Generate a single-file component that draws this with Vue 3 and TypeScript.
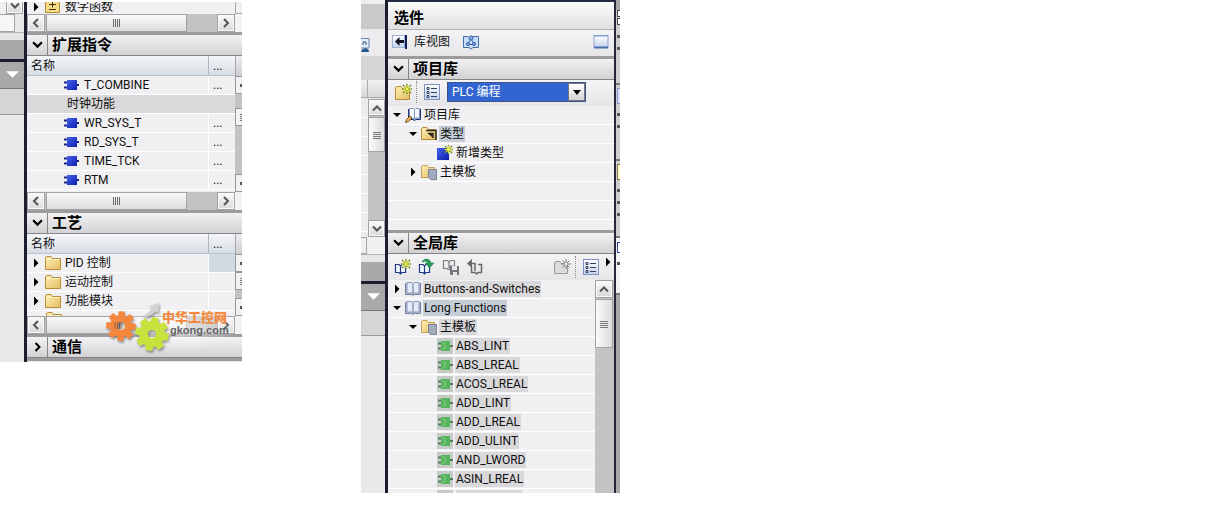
<script setup lang="ts">
import { ref } from 'vue'

interface InstructionRow {
  name: string
  icon?: string
}

const clockRows: InstructionRow[] = [
  { name: 'T_COMBINE', icon: 'block' },
  { name: '时钟功能' },
  { name: 'WR_SYS_T', icon: 'block' },
  { name: 'RD_SYS_T', icon: 'block' },
  { name: 'TIME_TCK', icon: 'block' },
  { name: 'RTM', icon: 'block' },
]

const technologyRows: string[] = ['PID 控制', '运动控制', '功能模块']

const functions: string[] = [
  'ABS_LINT',
  'ABS_LREAL',
  'ACOS_LREAL',
  'ADD_LINT',
  'ADD_LREAL',
  'ADD_ULINT',
  'AND_LWORD',
  'ASIN_LREAL',
]

const library = ref('PLC 编程')

function gear(cx: number, cy: number, inner: number, outer: number, turn: number): string {
  const points: string[] = []
  const offsets: [number, number][] = [
    [-0.3, inner],
    [-0.2, outer],
    [0.2, outer],
    [0.3, inner],
  ]
  for (let i = 0; i < 8; i++) {
    const mid = turn + (i * Math.PI) / 4
    for (const [delta, radius] of offsets) {
      const x = cx + radius * Math.cos(mid + delta)
      const y = cy + radius * Math.sin(mid + delta)
      points.push(`${x.toFixed(2)} ${y.toFixed(2)}`)
    }
  }
  const hole = 4
  return `M${points.join('L')}ZM${cx - hole} ${cy}a${hole} ${hole} 0 1 0 ${hole * 2} 0a${hole} ${hole} 0 1 0 ${-hole * 2} 0Z`
}

const orangeGear = gear(14, 23, 11, 15, 0.05)
const greenGear = gear(45, 31, 13, 17, 0.2)
</script>

<template>
  <svg class="defs" aria-hidden="true">
    <defs>
      <linearGradient id="fold" x1="0" y1="0" x2="1" y2="1">
        <stop offset="0" stop-color="#fff0b8" />
        <stop offset="1" stop-color="#e2bd62" />
      </linearGradient>
      <linearGradient id="blue" x1="0" y1="0" x2="1" y2="1">
        <stop offset="0" stop-color="#4664ea" />
        <stop offset="1" stop-color="#0c1cae" />
      </linearGradient>
      <linearGradient id="page" x1="0" y1="0" x2="0" y2="1">
        <stop offset="0" stop-color="#fff" />
        <stop offset="1" stop-color="#c4d2ea" />
      </linearGradient>
    </defs>
    <symbol id="down" viewBox="0 0 10 8"><path d="M1 1.5L5 5.5L9 1.5" fill="none" stroke="currentColor" stroke-width="2" /></symbol>
    <symbol id="right" viewBox="0 0 8 10"><path d="M2 1L6 5L2 9" fill="none" stroke="currentColor" stroke-width="2" /></symbol>
    <symbol id="tri-r" viewBox="0 0 8 10"><path d="M2 0.5L6.5 5L2 9.5Z" /></symbol>
    <symbol id="tri-d" viewBox="0 0 8 10"><path d="M0 3H8L4 7Z" /></symbol>
    <symbol id="block" viewBox="0 0 16 16">
      <path d="M0 5.5H5M0 10.5H5M12 8H15" stroke="#1a2380" stroke-width="2" />
      <rect x="3" y="3" width="10" height="10" fill="url(#blue)" />
    </symbol>
    <symbol id="gblock" viewBox="0 0 16 16">
      <rect width="16" height="16" fill="#c6cbc8" />
      <path d="M1 5.5H5M1 10.5H5M12 8H16" stroke="#4f7d59" stroke-width="2" />
      <rect x="4" y="3" width="9" height="10" fill="#55b45c" />
      <path d="M8 5V11M5 5H7M5 11H7" stroke="#85d488" />
    </symbol>
    <symbol id="folder" viewBox="0 0 16 16">
      <path d="M0.5 14.5V2.5L2 1.5H6L7.5 3.5H15.5V14.5Z" fill="url(#fold)" stroke="#b98d32" />
      <path d="M1.5 4H6M8 4.5H14.5" stroke="#fff7d4" />
    </symbol>
    <symbol id="math" viewBox="0 0 16 16">
      <rect x="0.5" y="0.5" width="14" height="13" fill="#f6dc85" stroke="#b38b38" />
      <path d="M4 5.5H11M7.5 2.5V8.5M4 10.5H11" stroke="#453314" />
    </symbol>
    <symbol id="typefolder" viewBox="0 0 16 16">
      <path d="M0.5 13.5V2.5L2 1.5H6L7.5 3.5H14.5V13.5Z" fill="url(#fold)" stroke="#b98d32" />
      <path d="M5 4.5H15V14M7 7.5H12V12" fill="none" stroke="#2d2920" stroke-width="1.5" />
      <path d="M6.500 7H11.500V11.500Z" fill="#2d2920" />
    </symbol>
    <symbol id="masterfolder" viewBox="0 0 16 16">
      <path d="M0.5 13.5V2.5L2 1.5H6L7.5 3.5H13.5V13.5Z" fill="url(#fold)" stroke="#c2a258" />
      <path d="M7.5 5.5H15.5V15.5H9.5L7.5 13.5Z" fill="#a3acbf" stroke="#7d8494" />
    </symbol>
    <symbol id="book" viewBox="0 0 16 16">
      <path d="M0.5 2V13.5H6.5L8 14.5L9.500 13.5H15.5V2" fill="#b9c3da" stroke="#75809e" />
      <path d="M2 1.5H7L8 2.5V13L7 12H2ZM14 1.5H9L8 2.5V13L9 12H14Z" fill="#e4eaf7" stroke="#8c98b8" />
    </symbol>
    <symbol id="bookpen" viewBox="0 0 16 16">
      <path d="M3.5 2V12.5H8L9.5 13.5L11 12.5H15.5V2" fill="#9fb1de" stroke="#26356b" />
      <path d="M4.500 1.500H8.500L9.500 2.500V12L8.500 11H4.500ZM14.500 1.500H10.500L9.500 2.500V12L10.500 11H14.500Z" fill="#f6f9ff" stroke="#8191c0" />
      <path d="M0.500 15.500L1.500 12.500L5 9L7 11L3.500 14.500Z" fill="#e9b05c" stroke="#80531f" />
    </symbol>
    <symbol id="spark" viewBox="0 0 10 10">
      <path d="M5 0V10M0 5H10M1 1L9 9M9 1L1 9" stroke="#6f8420" stroke-width="1.500" />
      <path d="M5 1V9M1 5H9M2 2L8 8M8 2L2 8" stroke="#f2f757" />
    </symbol>
    <symbol id="newtype" viewBox="0 0 16 16">
      <rect x="0" y="3" width="12" height="12" fill="url(#blue)" />
      <use href="#spark" x="7" y="0" width="9" height="9" />
    </symbol>
    <symbol id="newfolder" viewBox="0 0 18 18">
      <path d="M1.500 16.500V4.500L3 3.500H7L8.500 5.500H15.500V16.500Z" fill="url(#fold)" stroke="#b98d32" />
      <use href="#spark" x="8" y="1" width="10" height="10" />
    </symbol>
    <symbol id="graynewfolder" viewBox="0 0 18 18">
      <path d="M1.500 15.500V4.500L3 3.500H7L8.500 5.500H14.500V15.500Z" fill="#dcdcde" stroke="#99999d" />
      <path d="M13 1V11M8 6H18M9.500 2.500L16.500 9.500M16.500 2.500L9.500 9.500" stroke="#77777b" />
      <circle cx="13" cy="6" r="1.500" fill="#eee" />
    </symbol>
    <symbol id="list" viewBox="0 0 16 16">
      <rect x="0.500" y="0.500" width="15" height="15" fill="url(#page)" stroke="#7d93bf" />
      <path d="M7 4.500H13M7 8.500H13M7 12.500H13" stroke="#34405f" />
      <path d="M3 3.500H5V5.500H3ZM3 7.500H5V9.500H3ZM3 11.500H5V13.500H3Z" fill="none" stroke="#34405f" />
    </symbol>
    <symbol id="window" viewBox="0 0 16 16">
      <rect x="1" y="1.500" width="14" height="12" fill="url(#page)" stroke="#8ba3d2" />
      <path d="M1 2H15" stroke="#7b98ce" />
      <path d="M1 13.500H15" stroke="#4d6db2" stroke-width="2" />
    </symbol>
    <symbol id="back" viewBox="0 0 16 16">
      <rect x="0.500" y="1.500" width="12" height="12" fill="url(#page)" stroke="#a0b2d3" />
      <path d="M14 1V15" stroke="#101d58" stroke-width="2" />
      <path d="M12 7.500H6" stroke="#101020" stroke-width="3" /><path d="M7.500 3V12L3 7.500Z" fill="#101020" />
    </symbol>
    <symbol id="share" viewBox="0 0 16 16">
      <path d="M0.500 2.500H5M10 2.500H15.500V13.500H10L8 15L6 13.500H0.500V2.500" fill="#c8ddfa" stroke="#4470aa" />
      <path d="M8 5L4.500 10.500H11.500Z" fill="none" stroke="#315aa0" />
      <circle cx="8" cy="4" r="2" fill="#8db7f2" stroke="#315aa0" /><circle cx="5" cy="10" r="1.500" fill="#8db7f2" stroke="#315aa0" /><circle cx="11" cy="10" r="1.500" fill="#8db7f2" stroke="#315aa0" />
    </symbol>
    <symbol id="smallbook" viewBox="0 0 12 12">
      <path d="M1 1.500H4.500L6 3L7.500 1.500H11V9.500H7.500L6 11L4.500 9.500H1ZM6 3V10" fill="#f2f6ff" stroke="currentColor" stroke-width="1.200" />
    </symbol>
    <symbol id="newbook" viewBox="0 0 18 18">
      <use href="#smallbook" x="0" y="5" width="13" height="12" color="#223a83" />
      <use href="#spark" x="7" y="1" width="10" height="10" />
    </symbol>
    <symbol id="openbook" viewBox="0 0 18 18">
      <use href="#smallbook" x="0" y="5" width="13" height="12" color="#223a83" />
      <path d="M4 4C6 0 12 0 13 5H16L11.500 10L7.500 5H10C9 3 7 3 4 4Z" fill="#279b5a" stroke="#11713b" stroke-width="0.500" />
    </symbol>
    <symbol id="savebook" viewBox="0 0 18 18">
      <path d="M1.500 2.500H5.500L7 4L8.500 2.500H12.500V8H8V11.500H6L5 10.500H1.500ZM7 4V10" fill="#ececee" stroke="#808084" stroke-width="1.200" />
      <path d="M8 8H17V17H9L8 16Z" fill="#77777b" /><path d="M10 8H15V12H10ZM11 14H15V17H11Z" fill="#e6e6e8" />
    </symbol>
    <symbol id="undobook" viewBox="0 0 18 18">
      <path d="M5 5.500H9V13M5.500 8V14.500H9L10.500 16L12 14.500H15.500V6.500H12" fill="none" stroke="#68686c" stroke-width="1.500" />
      <path d="M6 1V10L1 5.500Z" fill="#68686c" />
    </symbol>
  </svg>

  <main class="screen">
    <section class="shot tasks" aria-label="指令">
      <div class="edge">
        <div class="edge-top">
          <button class="sb sb-v" aria-label="向下滚动"><svg class="chev"><use href="#down" /></svg></button>
        </div>
        <div class="edge-box"></div>
        <div class="edge-gap"></div>
        <div class="edge-bar"></div>
        <div class="edge-tri"><svg viewBox="0 0 12 6"><path d="M0 0H12L6 6Z" fill="#fff" /></svg></div>
        <div class="edge-tab"></div>
      </div>
      <div class="pane">
        <div class="split">
          <div class="grow">
            <div class="cut-top row">
              <svg class="tri"><use href="#tri-r" /></svg>
              <svg class="ic"><use href="#math" /></svg><span>数字函数</span>
            </div>
            <div class="hscroll">
              <button class="sb" aria-label="向左滚动"><svg class="chev flip"><use href="#right" /></svg></button>
              <div class="hthumb"><i class="grip"></i></div>
              <button class="sb" aria-label="向右滚动"><svg class="chev"><use href="#right" /></svg></button>
            </div>
          </div>
          <div class="vs"><div class="vcut"></div><div class="vblank"></div></div>
        </div>

        <h2 class="title"><button aria-label="折叠"><svg><use href="#down" /></svg></button><span>扩展指令</span></h2>
        <div class="split">
          <div class="grow">
            <table>
              <thead><tr><th scope="col">名称</th><th scope="col" class="dots">...</th></tr></thead>
              <tbody>
                <tr v-for="row in clockRows" :key="row.name" :class="{ group: !row.icon }">
                  <td v-if="row.icon"><div class="row inst"><svg class="ic"><use href="#block" /></svg><span>{{ row.name }}</span></div></td>
                  <td v-else colspan="2"><div class="row group-name">{{ row.name }}</div></td>
                  <td v-if="row.icon" class="dots">...</td>
                </tr>
              </tbody>
            </table>
            <div class="under"></div>
            <div class="hscroll">
              <button class="sb" aria-label="向左滚动"><svg class="chev flip"><use href="#right" /></svg></button>
              <div class="hthumb"><i class="grip"></i></div>
              <button class="sb" aria-label="向右滚动"><svg class="chev"><use href="#right" /></svg></button>
            </div>
          </div>
          <div class="vs"><div class="vhead"></div><div class="vbtn"><i class="dot"></i></div><div class="vtrack"></div><div class="vbtn"><i class="grip-v"></i></div><div class="vtrack fill"></div><div class="vbtn"><i class="dot"></i></div><div class="vblank"></div></div>
        </div>

        <h2 class="title"><button aria-label="折叠"><svg><use href="#down" /></svg></button><span>工艺</span></h2>
        <div class="split">
          <div class="grow">
            <table>
              <thead><tr><th scope="col">名称</th><th scope="col" class="dots">...</th></tr></thead>
              <tbody>
                <tr v-for="(name, i) in technologyRows" :key="name">
                  <td><div class="row"><svg class="tri"><use href="#tri-r" /></svg><svg class="ic"><use href="#folder" /></svg><span>{{ name }}</span></div></td>
                  <td class="dots" :class="{ picked: i === 0 }"></td>
                </tr>
              </tbody>
            </table>
            <div class="cut-bottom"><svg class="ic"><use href="#folder" /></svg></div>
            <div class="hscroll">
              <button class="sb" aria-label="向左滚动"><svg class="chev flip"><use href="#right" /></svg></button>
              <div class="hthumb"><i class="grip"></i></div>
              <button class="sb" aria-label="向右滚动"><svg class="chev"><use href="#right" /></svg></button>
            </div>
          </div>
          <div class="vs"><div class="vhead"></div><div class="vbtn"><i class="dot"></i></div><div class="vbtn"><i class="grip-v"></i></div><div class="vtrack fill"></div><div class="vbtn"><i class="dot"></i></div><div class="vblank"></div></div>
        </div>

        <h2 class="title"><button aria-label="展开"><svg><use href="#right" /></svg></button><span>通信</span></h2>
        <div class="tail"></div>

        <svg class="mark" viewBox="0 0 124 52" role="img" aria-label="中华工控网 gkong.com">
          <defs>
            <radialGradient id="halo"><stop offset="0" stop-color="#fff" stop-opacity="0.6" /><stop offset="1" stop-color="#fff" stop-opacity="0" /></radialGradient>
            <filter id="shade" x="-10%" y="-10%" width="125%" height="130%"><feDropShadow dx="1" dy="2" stdDeviation="1" flood-color="#555" flood-opacity="0.6" /></filter>
          </defs>
          <ellipse cx="70" cy="24" rx="62" ry="26" fill="url(#halo)" />
          <g filter="url(#shade)">
            <path d="M34 13C39 12 43 9 45 5L42 3L52 0L51 10L48 8C45 13 40 15 34 13Z" fill="#d2d2d4" />
            <path :d="orangeGear" fill="#f5863c" fill-rule="evenodd" />
            <path :d="greenGear" fill="#c8e13c" fill-rule="evenodd" />
            <path d="M8 19V26M11 19V26M14 19V26" stroke="#8a5f42" />
          </g>
          <text x="55" y="19" class="mark-cn">中华工控网</text>
          <text x="63" y="31" class="mark-en">gkong.com</text>
        </svg>
      </div>
    </section>

    <section class="shot library" aria-label="库">
      <div class="edge">
        <div class="l-top"></div>
        <div class="l-gray"></div>
        <div class="l-tool"><svg viewBox="0 0 9 16"><path d="M0 1.500H8V11H0" fill="#e4eefa" stroke="#6a87ad" /><path d="M2 8V5H5V8" fill="none" stroke="#334a70" /><path d="M0 15C1 10 8 10 8 15Z" fill="#235a91" /></svg></div>
        <div class="l-sub"></div>
        <div class="l-head"><span></span></div>
        <div class="l-body">
          <div class="l-lines"></div>
          <div class="vscroll">
            <button class="sb sb-v" aria-label="向上滚动"><svg class="chev turn"><use href="#down" /></svg></button>
            <div class="vthumb"><i class="grip-v"></i></div>
            <div class="fill"></div>
            <button class="sb sb-v" aria-label="向下滚动"><svg class="chev"><use href="#down" /></svg></button>
          </div>
        </div>
        <div class="l-box"><span></span></div>
        <div class="edge-gap"></div>
        <div class="edge-bar"></div>
        <div class="edge-tri"><svg viewBox="0 0 12 6"><path d="M0 0H12L6 6Z" fill="#fff" /></svg></div>
        <div class="edge-tab"></div>
      </div>
      <div class="pane">
        <div class="cap"></div>
        <h1>选件</h1>
        <div class="tools view">
          <button aria-label="返回"><svg class="ic"><use href="#back" /></svg></button>
          <button class="label">库视图</button>
          <button class="gap" aria-label="库管理"><svg class="ic"><use href="#share" /></svg></button>
          <button class="end" aria-label="窗口"><svg class="ic"><use href="#window" /></svg></button>
        </div>
        <h2 class="title"><button aria-label="折叠"><svg><use href="#down" /></svg></button><span>项目库</span></h2>
        <div class="tools project">
          <button aria-label="新建文件夹"><svg class="ic18"><use href="#newfolder" /></svg></button>
          <button class="dotted" aria-label="列表"><svg class="ic"><use href="#list" /></svg></button>
          <div class="combo">
            <select v-model="library" aria-label="项目库"><option>PLC 编程</option></select>
            <span class="combo-btn"><svg viewBox="0 0 8 5"><path d="M0 0H8L4 5Z" /></svg></span>
          </div>
        </div>
        <div class="tree">
          <div class="row"><svg class="tri"><use href="#tri-d" /></svg><svg class="ic"><use href="#bookpen" /></svg><span>项目库</span></div>
          <div class="row d1"><svg class="tri"><use href="#tri-d" /></svg><svg class="ic"><use href="#typefolder" /></svg><span class="sel">类型</span></div>
          <div class="row d2"><svg class="ic"><use href="#newtype" /></svg><span>新增类型</span></div>
          <div class="row d1"><svg class="tri"><use href="#tri-r" /></svg><svg class="ic"><use href="#masterfolder" /></svg><span>主模板</span></div>
          <div class="row"></div>
          <div class="row"></div>
          <div class="rest"></div>
        </div>
        <h2 class="title"><button aria-label="折叠"><svg><use href="#down" /></svg></button><span>全局库</span></h2>
        <div class="tools global">
          <button aria-label="新建库"><svg class="ic18"><use href="#newbook" /></svg></button>
          <button aria-label="打开库"><svg class="ic18"><use href="#openbook" /></svg></button>
          <button aria-label="保存库"><svg class="ic18"><use href="#savebook" /></svg></button>
          <button aria-label="关闭库"><svg class="ic18"><use href="#undobook" /></svg></button>
          <button class="end" aria-label="新建文件夹"><svg class="ic18"><use href="#graynewfolder" /></svg></button>
          <button class="dotted" aria-label="列表"><svg class="ic"><use href="#list" /></svg></button>
          <button class="more" aria-label="更多"><svg class="tri"><use href="#tri-r" /></svg></button>
        </div>
        <div class="split">
          <div class="tree grow">
            <div class="row"><svg class="tri"><use href="#tri-r" /></svg><svg class="ic"><use href="#book" /></svg><span class="tag">Buttons-and-Switches</span></div>
            <div class="row"><svg class="tri"><use href="#tri-d" /></svg><svg class="ic"><use href="#book" /></svg><span class="sel">Long Functions</span></div>
            <div class="row d1"><svg class="tri"><use href="#tri-d" /></svg><svg class="ic"><use href="#masterfolder" /></svg><span class="tag">主模板</span></div>
            <div v-for="name in functions" :key="name" class="row d2"><svg class="ic"><use href="#gblock" /></svg><span class="tag">{{ name }}</span></div>
            <div class="stub"><i></i><b></b></div>
          </div>
          <div class="vscroll wide">
            <button class="sb sb-v" aria-label="向上滚动"><svg class="chev turn"><use href="#down" /></svg></button>
            <div class="vthumb tall"><i class="grip-v"></i></div>
            <div class="fill"></div>
          </div>
        </div>
      </div>
      <div class="rail">
        <div class="r1"></div>
        <div class="r2"><i></i><i></i><b></b><b></b></div>
        <div class="r3"><em></em><b></b><b></b></div>
        <div class="r4"><em></em><b></b><b></b><b></b></div>
        <div class="r5"><em></em><b></b></div>
        <div class="r6"></div>
      </div>
    </section>
  </main>
</template>

<style>
body { background: #fff; }
</style>

<style scoped>
* { box-sizing: border-box; }
.defs { position: absolute; width: 0; height: 0; }
.screen {
  display: grid;
  grid-template-columns: 242fr 119fr 259fr 589fr;
  align-items: start;
  color: #111;
  font: 12px/18px Roboto, "Noto Sans CJK SC", sans-serif;
}
.shot { display: flex; overflow: hidden; }
.tasks { grid-column: 1; margin-top: 2px; }
.library { grid-column: 3; }
button { margin: 0; padding: 0; border: 0; background: none; font: inherit; color: inherit; display: flex; align-items: center; justify-content: center; }
svg { display: block; flex: none; }
.edge { width: 24px; flex: none; display: flex; flex-direction: column; background: #e9e8eb; }
.pane { flex: 1; min-width: 0; border-left: 3px solid #1c1d2e; background: #f0eff1; position: relative; }
.split { display: flex; }
.grow { flex: 1; min-width: 0; }
.fill { flex: 1; }
.ic { width: 16px; height: 16px; }
.ic18 { width: 18px; height: 18px; }
.tri { width: 8px; height: 10px; fill: #000; }

.edge-top { height: 12px; overflow: hidden; display: flex; justify-content: flex-end; align-items: flex-end; padding-right: 1px; background: #efeef0; }
.edge-box { height: 18px; width: 15px; border: 1px solid #a4a4a6; border-left: 0; background: #f6f6f7; }
.edge-gap { height: 8px; border-top: 1px solid #b5b5b7; background: #e6e6e8; }
.edge-bar { height: 22px; background: #a9a8ab; border-bottom: 3px solid #1c1d2e; }
.edge-tri { height: 27px; background: #a9a8ab; border-bottom: 1px solid #777; padding: 9px 0 0 6px; }
.edge-tri svg { width: 13px; height: 7px; }
.edge-tab { height: 26px; background: #d5d4d6; border-bottom: 1px solid #999; }

.sb { width: 18px; height: 18px; flex: none; border: 1px solid #a2a2a5; background: linear-gradient(#fbfbfb, #d9d9dc); box-shadow: inset 0 0 0 1px #f8f8f8; color: #555558; }
.sb-v { height: 17px; width: 17px; }
.chev { width: 10px; height: 10px; }
.flip, .turn { transform: rotate(180deg); }
.hscroll { display: flex; justify-content: space-between; height: 18px; background: #c3c2c4; }
.hthumb { flex: 1; margin: 0 30px 0 1px; border: 1px solid #a2a2a5; background: linear-gradient(#fafafa, #dcdcdf); display: flex; align-items: center; justify-content: center; }
.grip { width: 7px; height: 8px; background: repeating-linear-gradient(90deg, #68686b 0 1px, transparent 1px 2px); }
.grip-v { width: 8px; height: 8px; flex: none; background: repeating-linear-gradient(transparent 0 1px, #78787b 1px 2px); }

.row { display: flex; align-items: center; height: 18px; white-space: nowrap; }
.row .tri { margin: 0 5px; }
.row .ic + span { margin-left: 3px; padding: 0 1px; }
.cut-top { height: 12px; line-height: 8px; padding-bottom: 3px; overflow: hidden; }
.inst { padding-left: 37px; }
.group-name { padding-left: 40px; }

.title { display: flex; align-items: center; margin: 0; height: 24px; border-top: 3px solid #9d9b9e; border-bottom: 1px solid #858587; background: linear-gradient(#f2f1f3, #d2d1d4); font-size: 15px; line-height: 20px; font-weight: 700; color: #000; }
.title button { width: 21px; height: 20px; border-right: 1px solid #858587; }
.title svg { width: 11px; height: 10px; }
.title span { padding-left: 4px; }
.tail { height: 4px; border-top: 3px solid #9d9b9e; background: #e9e9ec; }

table { width: 100%; table-layout: fixed; border-spacing: 0; }
th, td { padding: 0; border-bottom: 1px solid #fff; height: 19px; line-height: 18px; }
th { height: 20px; padding-left: 4px; text-align: left; font-weight: 400; background: linear-gradient(#f5f6f8, #d6dde5); border-bottom-color: #b9c1ca; }
.dots { width: 27px; padding-left: 4px; border-left: 1px solid #fff; }
th.dots { border-left-color: #b0b8c0; }
.group { background: #d9d8da; }
.picked { background: #d2dae1; }
.under { height: 2px; }
.cut-bottom { height: 5px; overflow: hidden; padding-left: 19px; }

.vs { width: 7px; flex: none; display: flex; flex-direction: column; overflow: hidden; background: #f0eff1; }
.vhead { height: 20px; border-left: 1px solid #a5a5a8; background: linear-gradient(#efeff1, #cdcdd0); }
.vcut { height: 12px; border: 1px solid #a5a5a8; border-width: 0 0 1px 1px; }
.vbtn { height: 18px; border: 1px solid #98989b; border-right: 0; background: #f2f2f4; padding-left: 4px; display: flex; align-items: center; overflow: hidden; }
.dot { width: 2px; height: 3px; background: #555558; }
.vtrack { height: 14px; background: #c3c2c4; }
.vblank { height: 18px; background: #f3f3f5; }

.mark { position: absolute; left: 80px; top: 301px; width: 124px; height: 52px; overflow: visible; }
.mark-cn { font: 900 13px "Noto Sans CJK SC", sans-serif; fill: #f48a40; }
.mark-en { font: 700 11px "Liberation Sans", sans-serif; fill: #65656a; }

.library .pane { border-right: 2px solid #252637; }
.cap { height: 2px; background: #252b42; }
h1 { margin: 0; height: 28px; padding: 4px 6px 0; border-bottom: 1px solid #b4b4b7; background: linear-gradient(#fcfcfd, #e0e0e3); font-size: 15px; line-height: 24px; font-weight: 700; color: #000; }
.tools { display: flex; align-items: center; background: linear-gradient(#f4f3f5, #e6e5e8); }
.view { height: 26px; padding: 0 5px 2px 4px; }
.view .label { margin-left: 6px; }
.view .gap { margin-left: 13px; }
.end { margin-left: auto; }
.project { height: 26px; padding: 0 0 2px 6px; }
.dotted { height: 22px; border-left: 1px dotted #888; padding-left: 7px; }
.project .dotted { margin-left: 4px; }
.combo { display: flex; height: 20px; width: 139px; margin-left: 7px; border: 1px dotted #444; background: #3265d2; }
.combo select { appearance: none; flex: 1; min-width: 0; border: 0; padding: 0 4px; background: transparent; color: #fff; font: inherit; }
.combo-btn { width: 17px; border: 1px solid #777; background: linear-gradient(#fff, #d4d4d8); display: flex; align-items: center; justify-content: center; pointer-events: none; }
.combo-btn svg { width: 8px; height: 5px; }
.global { height: 26px; padding-left: 6px; }
.global button:nth-child(-n+4) { margin-right: 6px; }
.global .dotted { margin-left: 4px; }
.more { height: 20px; align-items: flex-start; margin: 0 2px 0 5px; }

.tree .row { height: 19px; border-bottom: 1px solid #fff; }
.tree .row .tri { margin-left: 5px; margin-right: 4px; }
.tree .row .ic + span { margin-left: 2px; }
.tree .d1 { padding-left: 16px; }
.tree .d2 { padding-left: 49px; }
.tree span { line-height: 16px; }
.tree .sel { background: #c5ced7; }
.tree .tag { background: #d9d8da; }
.rest { height: 10px; }
.stub { display: flex; gap: 3px; height: 4px; padding: 1px 0 0 49px; }
.stub i { width: 16px; background: #c6cbc8; }
.stub b { width: 66px; background: #d9d8da; }
.vscroll { width: 17px; flex: none; display: flex; flex-direction: column; background: #c3c2c4; }
.wide { width: 19px; padding-right: 1px; }
.wide .sb-v { width: 18px; height: 18px; }
.vthumb { height: 35px; margin-top: 1px; border: 1px solid #a2a2a5; background: linear-gradient(90deg, #fafafa, #dcdcdf); display: flex; align-items: center; justify-content: center; }
.tall { height: 49px; }

.l-top { height: 4px; background: #eeeef0; }
.l-gray { height: 25px; background: #c9c8cb; }
.l-tool { height: 27px; padding-top: 8px; background: #ecebee; }
.l-tool svg { width: 9px; height: 16px; }
.l-sub { height: 24px; background: #d6d5d8; }
.l-head { height: 18px; display: flex; background: linear-gradient(#f1f1f3, #d8d8db); border-bottom: 1px solid #aaa; }
.l-head span { width: 7px; border-right: 1px solid #aaa; }
.l-body { height: 139px; display: flex; padding-top: 1px; }
.l-lines { width: 7px; background: repeating-linear-gradient(#edecef 0 18px, #fff 18px 19px); }
.l-box { height: 17px; background: #f0eff1; }
.l-box span { display: block; height: 17px; width: 6px; border: 1px solid #a4a4a6; border-left: 0; }
.library .edge-tab { height: 25px; }

.rail { width: 4px; flex: none; display: flex; flex-direction: column; overflow: hidden; background: #aaa8ac; }
.rail div { display: flex; flex-direction: column; border-bottom: 2px solid #777679; background: #cfced1; padding-left: 1px; }
.rail i { height: 7px; margin-bottom: 1px; border: 1px solid #444; border-right: 0; background: #fff; }
.rail b { height: 3px; margin-top: 9px; background: #55555a; }
.rail em { height: 16px; border: 1px solid #827947; border-right: 0; background: #fff7c8; }
.rail .r1 { height: 10px; background: #aaa8ac; border: 0; }
.r2 { height: 75px; }
.rail .r3 { height: 76px; padding-top: 3px; }
.r3 em { background: #dce4ff; border-color: #8492cc; }
.rail .r4 { height: 77px; padding-top: 3px; }
.rail .r5 { height: 57px; padding-top: 4px; background: #f2f2f4; }
.r5 em { height: 11px; background: #fff; border-color: #3341a0; }
.rail .r6 { flex: 1; background: #aaa8ac; border: 0; }
</style>
